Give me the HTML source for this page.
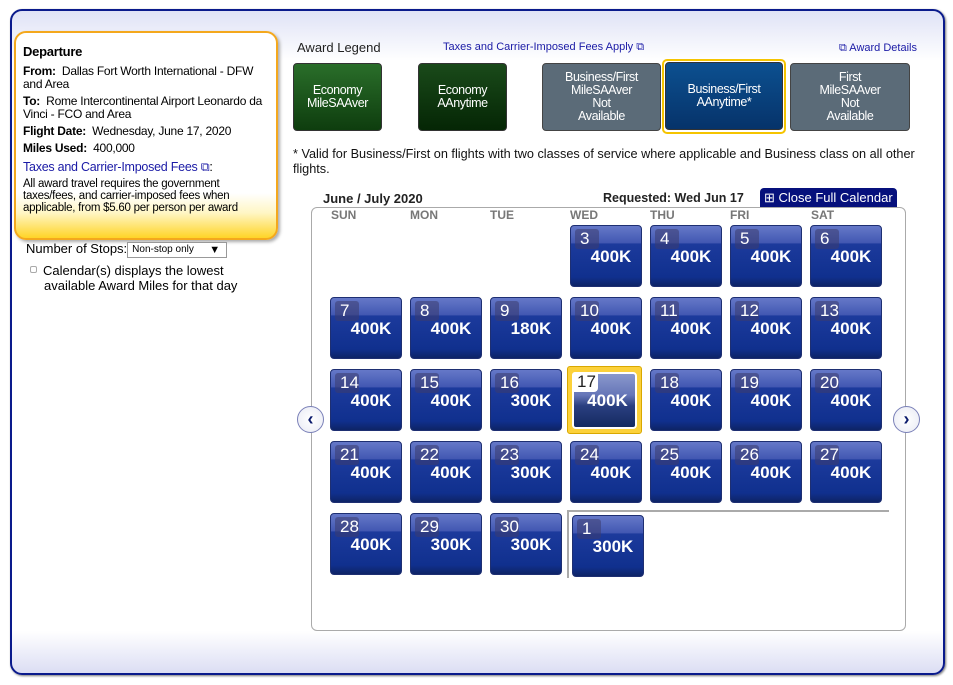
<!DOCTYPE html>
<html><head><style>
*{margin:0;padding:0;box-sizing:border-box}
body{width:953px;height:685px;background:#fff;font-family:"Liberation Sans",Arial,sans-serif;position:relative;overflow:hidden;color:#000}
.abs{position:absolute}
#outer{left:10px;top:9px;width:935px;height:666px;border:2px solid #0a1a8c;border-radius:12px;background:linear-gradient(#dfe2f6 0px,#fff 50px,#fff 620px,#dadcf3 664px);box-shadow:1px 1px 2px #777}
#dep{left:14px;top:31px;width:264px;height:209px;border:2px solid #f4a81d;border-radius:12px;background:linear-gradient(#fff 0,#fff 160px,#fff6c4 180px,#ffd21a 207px);box-shadow:2px 2px 3px #aaa;padding:12px 4px 0 7px;font-size:12px;line-height:13px;letter-spacing:-0.25px}
#dep b{font-weight:bold}
#dep p{margin-bottom:4px}
.lnk{color:#1a1aa6}
.leg{top:63px;height:68px;border-radius:4px;color:#fff;font-size:12.5px;line-height:13px;text-align:center;display:flex;align-items:center;justify-content:center;border:1px solid #333;letter-spacing:-0.4px}
.t{position:absolute;width:72px;height:62px;border-radius:4px;border:1px solid #1e2f72;background:linear-gradient(#6578c8 0,#4258b2 28%,#1c3a9c 30%,#10308e 85%,#0e2466 100%);color:#fff}
.t .n{position:absolute;left:4px;top:3px;width:24px;height:20px;background:rgba(60,60,110,.55);border-radius:3px;font-size:17px;line-height:20px;padding-left:5px}
.t .a{position:absolute;left:0;right:0;top:20px;text-align:center;padding-left:10px;font-size:17px;font-weight:bold;line-height:22px}
.dh{top:208px;font-size:12px;font-weight:bold;color:#777}
.arr{width:27px;height:27px;border-radius:50%;border:1px solid #7a80b8;background:radial-gradient(#fff,#e8eaf4);color:#0a1a6c;font-weight:bold;font-size:18px;text-align:center;line-height:25px}
</style></head><body>
<div id="outer" class="abs"></div>
<div id="dep" class="abs">
<p style="font-size:13px;font-weight:bold;margin-bottom:7px">Departure</p>
<p><b>From:</b>&nbsp; Dallas Fort Worth International - DFW and Area</p>
<p><b>To:</b>&nbsp; Rome Intercontinental Airport Leonardo da Vinci - FCO and Area</p>
<p><b>Flight Date:</b>&nbsp; Wednesday, June 17, 2020</p>
<p><b>Miles Used:</b>&nbsp; 400,000</p>
<p style="margin-top:6px;font-size:12.5px" class="lnk">Taxes and Carrier-Imposed Fees ⧉<span style="color:#000">:</span></p>
<p style="font-size:11.5px;line-height:12px">All award travel requires the government taxes/fees, and carrier-imposed fees when applicable, from $5.60 per person per award</p>
</div>
<div class="abs" style="left:26px;top:241px;font-size:13px">Number of Stops:<span style="display:inline-block;width:100px;height:16px;border:1px solid #999;font-size:10px;vertical-align:middle;padding-left:4px;line-height:14px;background:#fff">Non-stop only <span style="float:right;margin-right:6px;font-size:11px">▼</span></span></div>
<div class="abs" style="left:30px;top:263px;font-size:13px;line-height:15px"><span style="display:inline-block;width:7px;height:7px;border:1px solid #aaa;border-radius:2px;margin-right:6px;vertical-align:2px"></span>Calendar(s) displays the lowest<br><span style="padding-left:14px">available Award Miles for that day</span></div>

<div class="abs" style="left:297px;top:40px;font-size:13px;color:#222">Award Legend</div>
<div class="abs lnk" style="left:443px;top:41px;font-size:11px">Taxes and Carrier-Imposed Fees Apply ⧉</div>
<div class="abs lnk" style="left:839px;top:42px;font-size:11px">⧉ Award Details</div>
<div class="abs leg" style="left:293px;width:89px;background:linear-gradient(#2a6e2a,#0e3d0e)">Economy<br>MileSAAver</div>
<div class="abs leg" style="left:418px;width:89px;background:linear-gradient(#1a4a1a,#052605)">Economy<br>AAnytime</div>
<div class="abs leg" style="left:542px;width:119px;background:#5b6b78;border-color:#444">Business/First<br>MileSAAver<br>Not<br>Available</div>
<div class="abs" style="left:662px;top:59px;width:124px;height:75px;border:2px solid #f5c400;border-radius:5px"></div>
<div class="abs leg" style="left:665px;width:118px;top:62px;height:68px;background:linear-gradient(#0c5090,#06336a)">Business/First<br>AAnytime*</div>
<div class="abs leg" style="left:790px;width:120px;background:#5b6b78;border-color:#444">First<br>MileSAAver<br>Not<br>Available</div>
<div class="abs" style="left:293px;top:147px;font-size:12.7px;line-height:15px;width:645px;color:#111">* Valid for Business/First on flights with two classes of service where applicable and Business class on all other flights.</div>

<div class="abs" style="left:323px;top:191px;font-size:13px;font-weight:bold;color:#222">June / July 2020</div>
<div class="abs" style="left:603px;top:191px;font-size:12.5px;font-weight:bold;color:#222">Requested: Wed Jun 17</div>
<div class="abs" style="left:760px;top:188px;width:137px;height:19px;background:#06107c;border-radius:4px 4px 0 0;color:#fff;font-size:13px;line-height:19px;padding-left:4px">⊞ Close Full Calendar</div>
<div class="abs" style="left:311px;top:207px;width:595px;height:424px;border:1px solid #aaa;border-radius:6px;background:#fff"></div>
<div class="abs dh" style="left:331px">SUN</div><div class="abs dh" style="left:410px">MON</div><div class="abs dh" style="left:490px">TUE</div><div class="abs dh" style="left:570px">WED</div><div class="abs dh" style="left:650px">THU</div><div class="abs dh" style="left:730px">FRI</div><div class="abs dh" style="left:811px">SAT</div>
<div class="abs" style="left:567px;top:510px;width:322px;height:2px;background:#aaa"></div>
<div class="abs" style="left:567px;top:510px;width:2px;height:68px;background:#aaa"></div>

<div class="t" style="left:570px;top:225px"><div class="n">3</div><div class="a">400K</div></div>
<div class="t" style="left:650px;top:225px"><div class="n">4</div><div class="a">400K</div></div>
<div class="t" style="left:730px;top:225px"><div class="n">5</div><div class="a">400K</div></div>
<div class="t" style="left:810px;top:225px"><div class="n">6</div><div class="a">400K</div></div>
<div class="t" style="left:330px;top:297px"><div class="n">7</div><div class="a">400K</div></div>
<div class="t" style="left:410px;top:297px"><div class="n">8</div><div class="a">400K</div></div>
<div class="t" style="left:490px;top:297px"><div class="n">9</div><div class="a">180K</div></div>
<div class="t" style="left:570px;top:297px"><div class="n">10</div><div class="a">400K</div></div>
<div class="t" style="left:650px;top:297px"><div class="n">11</div><div class="a">400K</div></div>
<div class="t" style="left:730px;top:297px"><div class="n">12</div><div class="a">400K</div></div>
<div class="t" style="left:810px;top:297px"><div class="n">13</div><div class="a">400K</div></div>
<div class="t" style="left:330px;top:369px"><div class="n">14</div><div class="a">400K</div></div>
<div class="t" style="left:410px;top:369px"><div class="n">15</div><div class="a">400K</div></div>
<div class="t" style="left:490px;top:369px"><div class="n">16</div><div class="a">300K</div></div>
<div class="abs" style="left:567px;top:366px;width:75px;height:68px;background:#fcd13a;border:1px solid #d9a800;border-radius:3px"></div>
<div class="t" style="left:572px;top:372px;width:65px;height:57px;border:2px solid #fff;background:linear-gradient(#8a98cc 0,#6676b8 40%,#2a3f80 60%,#142a60 100%)"><div class="n" style="background:#fff;color:#222;left:-2px;top:-2px;width:26px;border-radius:3px 0 4px 0">17</div><div class="a" style="top:16px;padding-left:6px">400K</div></div>
<div class="t" style="left:650px;top:369px"><div class="n">18</div><div class="a">400K</div></div>
<div class="t" style="left:730px;top:369px"><div class="n">19</div><div class="a">400K</div></div>
<div class="t" style="left:810px;top:369px"><div class="n">20</div><div class="a">400K</div></div>
<div class="t" style="left:330px;top:441px"><div class="n">21</div><div class="a">400K</div></div>
<div class="t" style="left:410px;top:441px"><div class="n">22</div><div class="a">400K</div></div>
<div class="t" style="left:490px;top:441px"><div class="n">23</div><div class="a">300K</div></div>
<div class="t" style="left:570px;top:441px"><div class="n">24</div><div class="a">400K</div></div>
<div class="t" style="left:650px;top:441px"><div class="n">25</div><div class="a">400K</div></div>
<div class="t" style="left:730px;top:441px"><div class="n">26</div><div class="a">400K</div></div>
<div class="t" style="left:810px;top:441px"><div class="n">27</div><div class="a">400K</div></div>
<div class="t" style="left:330px;top:513px"><div class="n">28</div><div class="a">400K</div></div>
<div class="t" style="left:410px;top:513px"><div class="n">29</div><div class="a">300K</div></div>
<div class="t" style="left:490px;top:513px"><div class="n">30</div><div class="a">300K</div></div>
<div class="t" style="left:572px;top:515px"><div class="n">1</div><div class="a">300K</div></div>

<div class="abs arr" style="left:297px;top:406px">‹</div>
<div class="abs arr" style="left:893px;top:406px">›</div>
</body></html>
